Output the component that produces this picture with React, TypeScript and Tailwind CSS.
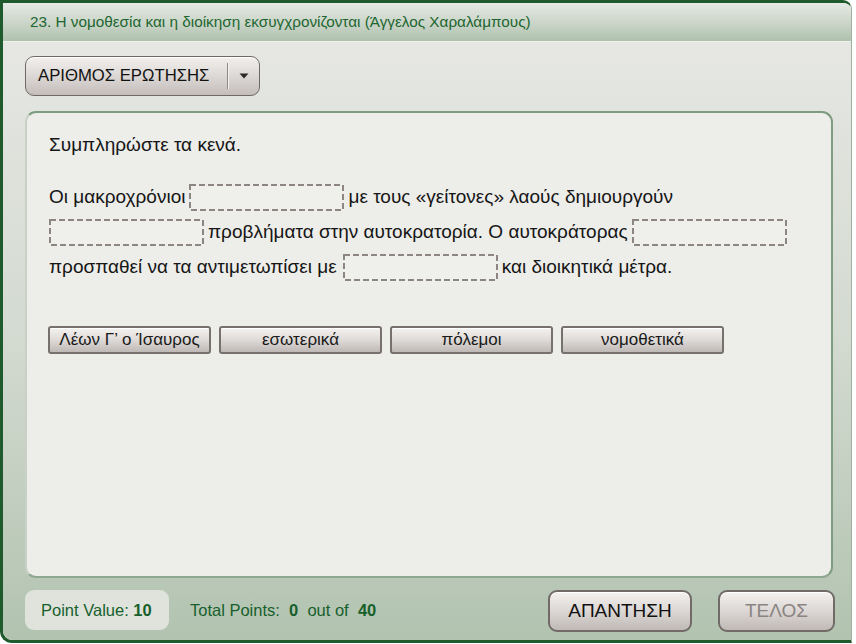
import React from "react";

const FONT = { fontFamily: '"Liberation Sans", Arial, sans-serif' };

function Blank() {
  return (
    <svg width="155" height="27" viewBox="0 0 155 27" className="shrink-0 block">
      <rect x="0" y="0" width="155" height="27" fill="#efefeb" />
      <rect
        x="1"
        y="1"
        width="153"
        height="25"
        fill="none"
        stroke="#8c8582"
        strokeWidth="2"
        strokeDasharray="6 3"
      />
    </svg>
  );
}

function WordButton({ label }: { label: string }) {
  return (
    <div className="w-[163px] h-[28px] rounded-[3px] border-2 border-[#77716e] bg-gradient-to-b from-[#f4f2f0] via-[#dedad7] to-[#bfb9b6] shadow-[inset_0_1px_0_#ffffff] flex items-center justify-center text-[17px] text-[#1a1a1a] whitespace-nowrap">
      {label}
    </div>
  );
}

export default function App() {
  return (
    <div className="w-[856px] h-[644px] bg-white" style={FONT}>
      <div className="w-[852px] h-[643px] flex flex-col border-t-[3px] border-l-[3px] border-b-[3px] border-r border-t-[#1f5a2c] border-l-[#1f5a2c] border-b-[#1f5a2c] border-r-[#9fb29d] rounded-tr-[9px] rounded-bl-[12px] overflow-hidden">
        {/* header */}
        <div className="h-[39px] shrink-0 bg-gradient-to-b from-[#e6e9e4] via-[#ccd6ca] to-[#afc2ae] flex items-center pl-[27px] border-b border-[#eef0ec]">
          <span className="text-[15.3px] text-[#1d6630] whitespace-nowrap">
            23. Η νομοθεσία και η διοίκηση εκσυγχρονίζονται (Άγγελος Χαραλάμπους)
          </span>
        </div>

        {/* body */}
        <div className="flex-1 flex flex-col pl-[22px] bg-gradient-to-b from-[#e6e7e3] via-[#d3dad0] to-[#b2c3b0]">
          {/* dropdown */}
          <div className="mt-[14px] w-[235px] h-[40px] rounded-[9px] border border-[#6f6865] bg-gradient-to-b from-[#f2f0ee] via-[#dcd8d5] to-[#c4bebb] shadow-[inset_0_1px_0_#ffffff] flex items-center">
            <span className="pl-[12px] w-[201px] text-[16.7px] text-[#111] whitespace-nowrap">ΑΡΙΘΜΟΣ ΕΡΩΤΗΣΗΣ</span>
            <span className="w-[2px] h-[26px] bg-[#8f8885] border-r border-[#f4f2f0]" />
            <span className="flex-1 flex items-center justify-center">
              <svg width="10" height="6" viewBox="0 0 10 6">
                <path d="M0.5 0.5 L9.5 0.5 L5 5.5 Z" fill="#2a2a2a" />
              </svg>
            </span>
          </div>

          {/* panel */}
          <div className="mt-[15px] w-[808px] h-[467px] rounded-[11px] border-2 border-[#7e9c81] border-l-[#c9d0c6] border-b-[#8ea78f] bg-[#ededea] pl-[22px] pt-[20px] text-[19px] text-[#161616]">
            <div className="h-[24px] flex items-center whitespace-nowrap">Συμπληρώστε τα κενά.</div>
            <div className="mt-[23px]">
              <div className="h-[35px] flex items-center whitespace-nowrap">
                <span>Οι μακροχρόνιοι</span>
                <span className="w-[4px]" />
                <Blank />
                <span className="w-[4px]" />
                <span>με τους «γείτονες» λαούς δημιουργούν</span>
              </div>
              <div className="h-[35px] flex items-center whitespace-nowrap">
                <Blank />
                <span className="w-[4px]" />
                <span>προβλήματα στην αυτοκρατορία. Ο αυτοκράτορας</span>
                <span className="w-[4px]" />
                <Blank />
              </div>
              <div className="h-[35px] flex items-center whitespace-nowrap">
                <span>προσπαθεί να τα αντιμετωπίσει με</span>
                <span className="w-[6px]" />
                <Blank />
                <span className="w-[4px]" />
                <span>και διοικητικά μέτρα.</span>
              </div>
            </div>
            <div className="mt-[41px] flex gap-[8px] -ml-[1px]">
              <WordButton label="Λέων Γ’ ο Ίσαυρος" />
              <WordButton label="εσωτερικά" />
              <WordButton label="πόλεμοι" />
              <WordButton label="νομοθετικά" />
            </div>
          </div>

          {/* footer */}
          <div className="mt-[12px] flex items-start">
            <div className="w-[144px] h-[40px] rounded-[9px] bg-[#dfe3dc] flex items-center pl-[16px] text-[16.5px] text-[#17602c] whitespace-nowrap">
              Point Value:&nbsp;<span className="font-bold">10</span>
            </div>
            <div className="ml-[21px] h-[40px] flex items-center text-[16.5px] text-[#17602c] whitespace-nowrap">
              Total Points:&nbsp;&nbsp;<span className="font-bold">0</span>&nbsp;&nbsp;out of&nbsp;&nbsp;<span className="font-bold">40</span>
            </div>
            <div className="ml-auto mr-[16px] flex gap-[26px]">
              <div className="w-[144px] h-[42px] rounded-[9px] border-2 border-[#716a67] bg-gradient-to-b from-[#f3f1ef] via-[#dcd7d4] to-[#c0bab7] shadow-[inset_0_1px_0_#ffffff] flex items-center justify-center text-[19px] text-[#111]">
                ΑΠΑΝΤΗΣΗ
              </div>
              <div className="w-[117px] h-[42px] rounded-[9px] border-2 border-[#716a67] bg-gradient-to-b from-[#f3f1ef] via-[#dcd7d4] to-[#c0bab7] shadow-[inset_0_1px_0_#ffffff] flex items-center justify-center text-[19px] text-[#8a8482]">
                ΤΕΛΟΣ
              </div>
            </div>
          </div>
        </div>
      </div>
    </div>
  );
}
